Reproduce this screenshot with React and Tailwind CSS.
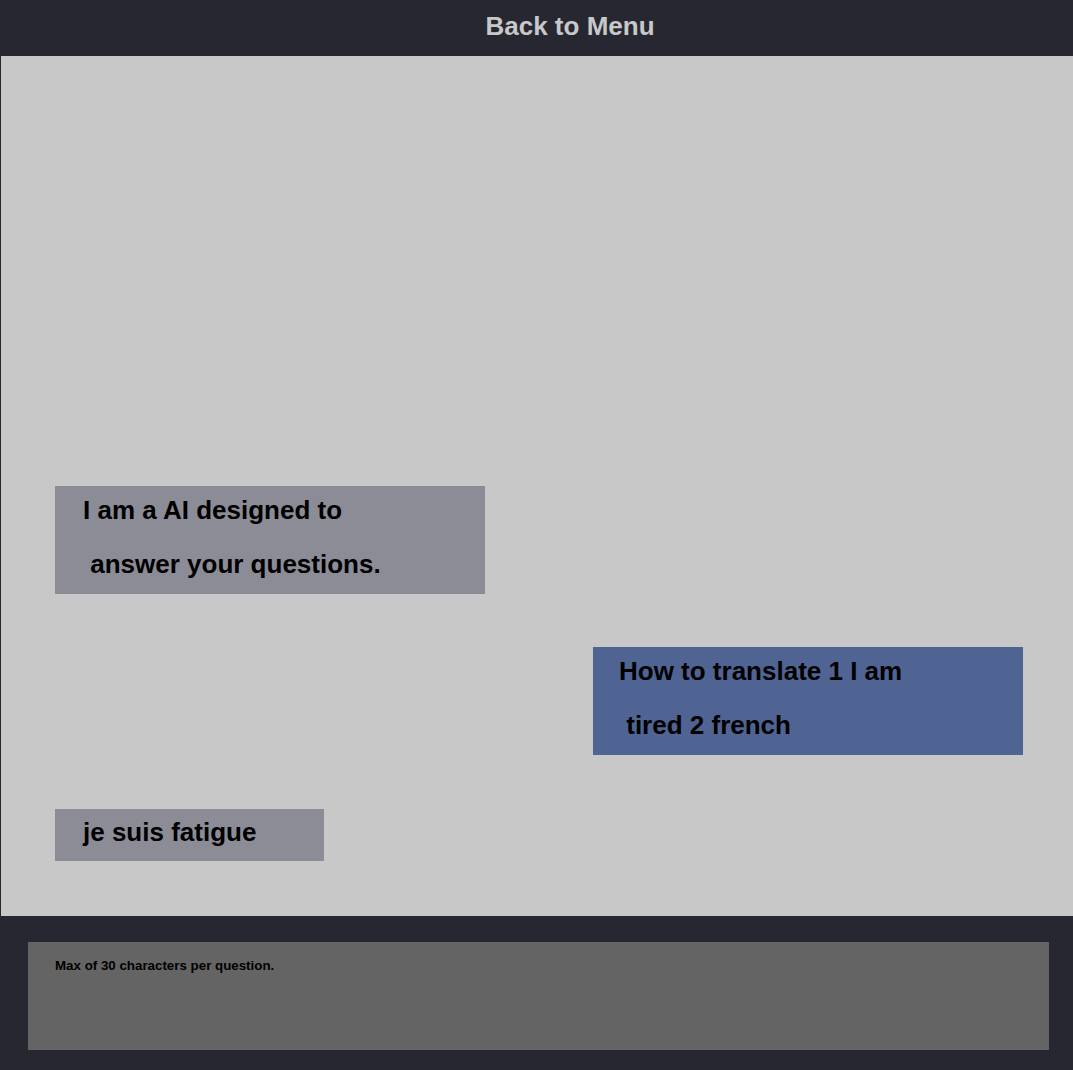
const messages = [
  { from: 'bot', lines: ['I am a AI designed to', ' answer your questions.'] },
  { from: 'user', lines: ['How to translate 1 I am', ' tired 2 french'] },
  { from: 'bot', lines: ['je suis fatigue'] },
];

function Bubble({ from, lines, first }) {
  const tone = from === 'user' ? 'self-end bg-[#506494] pl-[26px]' : 'self-start bg-[#8c8c96] pl-[28px]';
  const single = lines.length === 1;

  return (
    <div
      className={`${tone} ${single ? 'w-[269px] h-[52px] mt-[54px]' : 'w-[430px] h-[108px] pt-px'} ${!single && !first ? 'mt-[53px]' : ''} text-[26px] font-bold text-black whitespace-pre`}
    >
      {lines.map((line, i) => (
        <p key={i} className={`${single ? 'leading-[47px]' : 'leading-[46px]'} ${i > 0 ? 'mt-[8px]' : ''}`}>
          {line}
        </p>
      ))}
    </div>
  );
}

export default function App() {
  return (
    <div className="flex h-[1070px] w-full flex-col bg-[#272732] font-['Liberation_Sans',Arial,sans-serif]">
      <header className="flex h-[56px] shrink-0 items-center justify-center pb-1 pl-[67px]">
        <button className="text-[26px] font-bold text-[#c8c8c8]">Back to Menu</button>
      </header>

      <main className="ml-px flex h-[860px] flex-col justify-end bg-[#c8c8c8] pb-[55px] pl-[54px] pr-[50px]">
        {messages.map((m, i) => (
          <Bubble key={i} first={i === 0} {...m} />
        ))}
      </main>

      <footer className="flex h-[154px] shrink-0 pb-[20px] pl-[28px] pr-[24px] pt-[26px]">
        <textarea
          className="h-[108px] w-full resize-none bg-[#646464] pl-[27px] pt-[14px] text-[13.33px] font-bold text-black outline-none placeholder:text-black"
          placeholder="Max of 30 characters per question."
          maxLength={30}
        />
      </footer>
    </div>
  );
}
